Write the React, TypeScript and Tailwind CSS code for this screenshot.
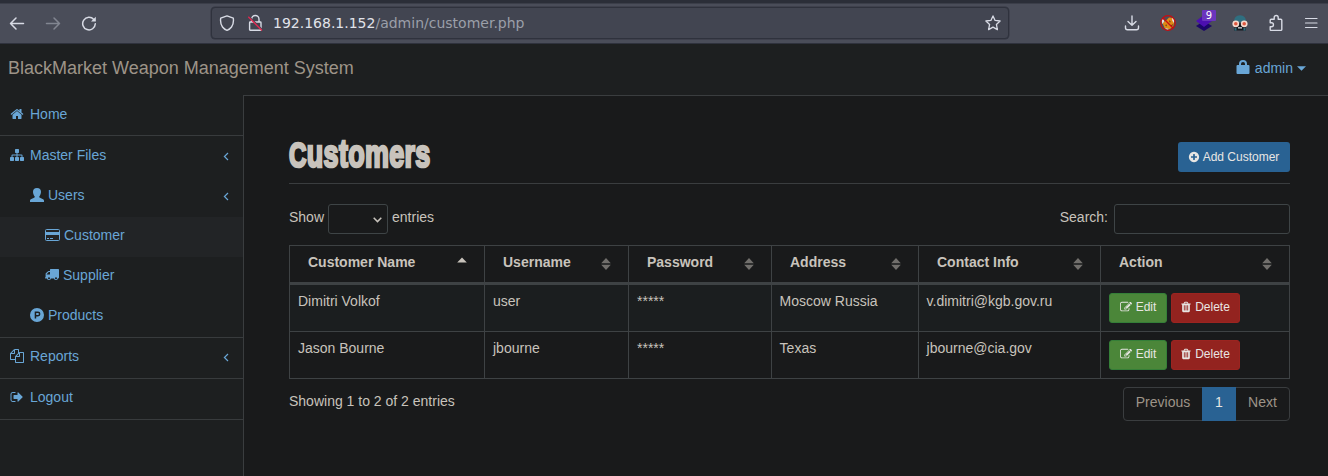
import type { ReactNode } from 'react';

type IconProps = { className?: string };

const PATHS = {
  home: 'M1472 992v480q0 26-19 45t-45 19h-384v-384h-256v384h-384q-26 0-45-19t-19-45v-480q0-1 .5-3t.5-3l575-474 575 474q1 2 1 6zm223-69l-62 74q-8 9-21 11h-3q-13 0-21-7l-692-577-692 577q-12 8-24 7-13-2-21-11l-62-74q-8-10-7-23.5t11-21.5l719-599q32-26 76-26t76 26l244 204v-195q0-14 9-23t23-9h192q14 0 23 9t9 23v408l219 182q10 8 11 21.5t-7 23.5z',
  sitemap: 'M1792 1248v320q0 40-28 68t-68 28h-320q-40 0-68-28t-28-68v-320q0-40 28-68t68-28h96v-192h-512v192h96q40 0 68 28t28 68v320q0 40-28 68t-68 28h-320q-40 0-68-28t-28-68v-320q0-40 28-68t68-28h96v-192h-512v192h96q40 0 68 28t28 68v320q0 40-28 68t-68 28h-320q-40 0-68-28t-28-68v-320q0-40 28-68t68-28h96v-192q0-52 38-90t90-38h512v-192h-96q-40 0-68-28t-28-68v-320q0-40 28-68t68-28h320q40 0 68 28t28 68v320q0 40-28 68t-68 28h-96v192h512q52 0 90 38t38 90v192h96q40 0 68 28t28 68z',
  signOut: 'M704 1440q0 4 1 20t.5 26.5-3 23.5-10 19.5-20.5 6.5h-320q-119 0-203.5-84.5t-84.5-203.5v-704q0-119 84.5-203.5t203.5-84.5h320q13 0 22.5 9.5t9.5 22.5q0 4 1 20t.5 26.5-3 23.5-10 19.5-20.5 6.5h-320q-66 0-113 47t-47 113v704q0 66 47 113t113 47h312l11.5 1 11.5 3 8 5.5 7 9 2 13.5zm928-544q0 26-19 45l-544 544q-19 19-45 19t-45-19-19-45v-288h-448q-26 0-45-19t-19-45v-384q0-26 19-45t45-19h448v-288q0-26 19-45t45-19 45 19l544 544q19 19 19 45z',
  files: 'M1696 384q40 0 68 28t28 68v1216q0 40-28 68t-68 28h-960q-40 0-68-28t-28-68v-288h-544q-40 0-68-28t-28-68v-672q0-40 20-88t48-76l408-408q28-28 76-48t88-20h416q40 0 68 28t28 68v328q68-40 128-40h416zm-544 213l-299 299h299v-299zm-640-384l-299 299h299v-299zm196 647l316-316v-416h-384v416q0 40-28 68t-68 28h-416v640h512v-256q0-40 20-88t48-76zm956 804v-1152h-384v416q0 40-28 68t-68 28h-416v640h896z',
  plus: 'M1344 960v-128q0-26-19-45t-45-19h-256v-256q0-26-19-45t-45-19h-128q-26 0-45 19t-19 45v256h-256q-26 0-45 19t-19 45v128q0 26 19 45t45 19h256v256q0 26 19 45t45 19h128q26 0 45-19t19-45v-256h256q26 0 45-19t19-45zm320-64q0 209-103 385.5t-279.5 279.5-385.5 103-385.5-103-279.5-279.5-103-385.5 103-385.5 279.5-279.5 385.5-103 385.5 103 279.5 279.5 103 385.5z',
  edit: 'M888 1184l116-116-152-152-116 116v56h96v96h56zm440-720q-16-16-33 1l-350 350q-17 17-1 33t33-1l350-350q17-17 1-33zm80 594v190q0 119-84.5 203.5t-203.5 84.5h-832q-119 0-203.5-84.5t-84.5-203.5v-832q0-119 84.5-203.5t203.5-84.5h832q63 0 117 25 15 7 18 23 3 17-9 29l-49 49q-14 14-32 8-23-6-45-6h-832q-66 0-113 47t-47 113v832q0 66 47 113t113 47h832q66 0 113-47t47-113v-126q0-13 9-22l64-64q15-15 35-7t20 29zm-96-738l288 288-672 672h-288v-288zm444 132l-92 92-288-288 92-92q28-28 68-28t68 28l152 152q28 28 28 68t-28 68z',
  trash: 'M704 1376v-704q0-14-9-23t-23-9h-64q-14 0-23 9t-9 23v704q0 14 9 23t23 9h64q14 0 23-9t9-23zm256 0v-704q0-14-9-23t-23-9h-64q-14 0-23 9t-9 23v704q0 14 9 23t23 9h64q14 0 23-9t9-23zm256 0v-704q0-14-9-23t-23-9h-64q-14 0-23 9t-9 23v704q0 14 9 23t23 9h64q14 0 23-9t9-23zm-544-992h448l-48-117q-7-9-17-11h-317q-10 2-17 11zm928 32v64q0 14-9 23t-23 9h-96v948q0 83-47 143.5t-113 60.5h-832q-66 0-113-58.5t-47-141.5v-952h-96q-14 0-23-9t-9-23v-64q0-14 9-23t23-9h309l70-167q15-37 54-63t79-26h320q40 0 79 26t54 63l70 167h309q14 0 23 9t9 23z',
};

function Icon({ name, className = 'size-3.5' }: IconProps & { name: keyof typeof PATHS }) {
  return (
    <svg viewBox="0 0 1792 1792" fill="currentColor" className={`shrink-0 ${className}`}>
      <path d={PATHS[name]} />
    </svg>
  );
}

function UserIcon() {
  return (
    <svg viewBox="0 0 14 14" fill="currentColor" className="size-3.5 shrink-0">
      <path d="M7 0C9.7 0 11 1.3 11 3.8C11 5.5 10.3 7.3 9.3 8.4C9.1 9.1 9.3 9.4 10 9.7L12.6 10.9C13.5 11.3 14 11.8 14 12.6V14H0V12.6C0 11.8 .5 11.3 1.4 10.9L4 9.7C4.7 9.4 4.9 9.1 4.7 8.4C3.7 7.3 3 5.5 3 3.8C3 1.3 4.3 0 7 0Z" />
    </svg>
  );
}

function CardIcon() {
  return (
    <svg viewBox="0 0 15 12" className="h-3 w-[15px] shrink-0">
      <rect x=".5" y=".5" width="14" height="11" rx="1" fill="none" stroke="currentColor" />
      <path d="M1 3h13v3H1zM2 9h2v1H2zM5 9h3v1H5z" fill="currentColor" />
    </svg>
  );
}

function TruckIcon() {
  return (
    <svg viewBox="0 0 14 12" fill="currentColor" className="h-3 w-3.5 shrink-0">
      <path fillRule="evenodd" d="M5.6 0H13.3Q14 0 14 .7V8.6Q14 9.4 13.2 9.4H12.9A2 2 0 0 1 9 9.4H5.9A2 2 0 0 1 2 9.4H.4Q0 9.4 0 9V8.6L.6 8.2V5Q.6 4.5 1 4.1L2.8 2.4Q3.1 2 3.6 2H5V.7Q5 0 5.6 0ZM3.7 3L1.6 5.2V5.6H5V3ZM4 8.3A1 1 0 1 0 4 10.3A1 1 0 0 0 4 8.3ZM11 8.3A1 1 0 1 0 11 10.3A1 1 0 0 0 11 8.3Z" />
    </svg>
  );
}

function ProductIcon() {
  return (
    <svg viewBox="0 0 14 14" fill="currentColor" className="size-3.5 shrink-0">
      <path fillRule="evenodd" d="M7 0A7 7 0 1 1 7 14A7 7 0 0 1 7 0ZM4.7 3.6V10.4H6.2V8.4H8A2.4 2.4 0 0 0 8 3.6ZM6.2 5.1H8A.9.9 0 0 1 8 6.9H6.2Z" />
    </svg>
  );
}

function Chevron() {
  return (
    <svg viewBox="0 0 6 9" fill="none" stroke="currentColor" strokeWidth="1.2" className="mt-0.5 ml-auto h-[9px] w-1.5">
      <path d="M5 1L1.4 4.5L5 8" />
    </svg>
  );
}

function SortIcon({ active }: { active?: boolean }) {
  return active ? (
    <svg viewBox="0 0 10 12" className="mt-0.5 h-3 w-2.5 fill-[#c8c3bc]">
      <path d="M.2 5.6L5 .6L9.8 5.6Z" />
    </svg>
  ) : (
    <svg viewBox="0 0 10 12" className="mt-1 h-3 w-2.5 fill-[#716f6c]">
      <path d="M.2 5.3L5 0L9.8 5.3ZM.2 6.7H9.8L5 12Z" />
    </svg>
  );
}

function BrowserBar() {
  return (
    <header className="flex h-[43px] shrink-0 items-center border-t-[3px] border-[#2b2e38] bg-[#4a4d59] text-[#d8dbe5] shadow-[0_1px_0_#2f323d,inset_0_1px_0_#3b3e49]">
      <svg viewBox="0 0 100 16" fill="none" stroke="currentColor" strokeWidth="1.5" className="ml-[9px] h-4 w-[100px] shrink-0" strokeLinecap="round" strokeLinejoin="round">
        <path d="M1.5 8.5H14.5M7 3L1.5 8.5L7 14" />
        <path d="M37.5 8.5H50.5M45 3L50.5 8.5L45 14" opacity=".4" />
        <path d="M84.8 4.5A6.3 6.3 0 1 0 86.3 8.8" />
        <path d="M86.8 1.8V6.5H82Z" fill="currentColor" stroke="none" />
      </svg>
      <div className="ml-[102px] flex h-8 w-[798px] shrink-0 items-center rounded border border-[#2f323d] bg-[#424551] shadow-[0_0_0_0.5px_#343743]">
        <svg viewBox="0 0 16 16" fill="none" stroke="currentColor" strokeWidth="1.4" strokeLinejoin="round" className="ml-[7px] size-4">
          <path d="M8 .9L14.3 3.2Q15 8.5 12.5 12Q10.8 14.3 8 15.3Q5.2 14.3 3.5 12Q1 8.5 1.7 3.2Z" />
        </svg>
        <svg viewBox="0 0 16 18" fill="none" stroke="currentColor" strokeWidth="1.4" className="ml-3 h-[18px] w-4">
          <path d="M4.6 8V5.2A3.7 3.7 0 0 1 12 5.2V8M3.2 8H13.4Q14 8 14 8.7V15.6Q14 16.2 13.4 16.2H3.2Q2.6 16.2 2.6 15.6V8.7Q2.6 8 3.2 8Z" />
          <path d="M2 2.4L15.4 15.6" className="stroke-[#424551]" strokeWidth="1.2" />
          <path d="M1.3 2.8L15 16.5" className="stroke-[#e22850]" strokeWidth="1.3" />
        </svg>
        <span className="ml-2.5 font-['DejaVu_Sans',sans-serif] text-[14px] whitespace-nowrap text-[#9b9fa9]">
          <span className="text-[#e1e3ea]">192.168.1.152</span>/admin/customer.php
        </span>
        <svg viewBox="0 0 16 16" fill="none" stroke="currentColor" strokeWidth="1.3" strokeLinejoin="round" className="mr-[7px] ml-auto size-4">
          <path d="M8 .9L10.1 5.4L15.1 6L11.4 9.4L12.4 14.6L8 12.1L3.6 14.6L4.6 9.4L.9 6L5.9 5.4Z" />
        </svg>
      </div>
      <div className="ml-auto flex items-center pr-[10px]">
        <svg viewBox="0 0 16 16" fill="none" stroke="currentColor" strokeWidth="1.4" strokeLinecap="round" strokeLinejoin="round" className="mr-5 size-4">
          <path d="M8 1V10M4 6.5L8 10.3L12 6.5M1.5 11V12.8Q1.5 14.8 3.5 14.8H12.5Q14.5 14.8 14.5 12.8V11" />
        </svg>
        <svg viewBox="0 0 16 16" className="mr-5 size-4">
          <path d="M2.5 8L6 5.5L9 2.5L14 3L14 8L13 12L9 14.5L4.5 13Z" fill="#e18a16" />
          <path d="M1.2 5L3 4L4.5 6L2.5 9ZM12.5 2.5L14.5 5.5L13.6 8L12 5ZM5 13L9 14L7 15Z" fill="#e6e0dc" />
          <path d="M5 10L7 9.5L6.5 11.5ZM9 5L11 7L9.5 7.5ZM10.5 10.5L13 9L12 12Z" fill="#704214" />
          <circle cx="8" cy="8" r="7.3" fill="none" stroke="#c90c10" strokeWidth="1.2" />
          <path d="M2.8 2.8L13.2 13.2" stroke="#c90c10" strokeWidth="1.3" />
        </svg>
        <div className="relative mr-5 size-4">
          <svg viewBox="0 0 16 16" className="size-4">
            <path d="M8 6L16 11L8 16L0 11Z" fill="#1c0669" />
            <path d="M8 0L16 6L8 12L0 6Z" fill="#4c0fb0" />
          </svg>
          <span className="absolute -top-[5px] left-1.5 flex h-[11px] w-3.5 items-center justify-center rounded-[1px] bg-[#6b35bd] font-['DejaVu_Sans',sans-serif] text-[10px] leading-none text-white">9</span>
        </div>
        <svg viewBox="0 0 16 16" className="mr-5 size-4">
          <path d="M2 7Q2 .3 8 .3T14 7Z" fill="#2f6f80" />
          <path d="M2.5 12Q5 10 8 10T13.5 12L14 15.5H2Z" fill="#151b21" />
          <path d="M2.5 13h2v2.5h-2zM11.5 13h2v2.5h-2z" fill="#2f6f80" />
          <path d="M6 12.2h4v1.3H6z" fill="#d9dadd" />
          <path d="M6 8h4v3H6z" fill="#11151a" />
          <circle cx="3.8" cy="8.8" r="2.6" fill="#df5941" stroke="#f4d9ce" strokeWidth="1.6" />
          <circle cx="12.2" cy="8.8" r="2.6" fill="#df5941" stroke="#f4d9ce" strokeWidth="1.6" />
        </svg>
        <svg viewBox="0 0 16 18" fill="none" stroke="currentColor" strokeWidth="1.4" strokeLinejoin="round" className="mr-5 h-[18px] w-4">
          <path d="M2.2 6.2Q2.2 5.2 3.2 5.2H6.2V3.5A2 2 0 0 1 10.2 3.5V5.2H12.8Q13.8 5.2 13.8 6.2V15.4Q13.8 16.4 12.8 16.4H3.2Q2.2 16.4 2.2 15.4V12.7H3.5A1.9 1.9 0 0 0 3.5 8.8H2.2Z" />
        </svg>
        <svg viewBox="0 0 14 12" fill="none" stroke="currentColor" strokeWidth="1.2" strokeLinecap="round" className="h-3 w-3.5">
          <path d="M1.5 1.5H13M1.5 6H13M1.5 10.5H13" />
        </svg>
      </div>
    </header>
  );
}

function NavItem({ icon, label, className, expandable }: { icon: ReactNode; label: string; className: string; expandable?: boolean }) {
  return (
    <a className={`flex h-10 items-center pr-3.5 pb-0.5 ${className}`}>
      {icon}
      <span>{label}</span>
      {expandable && <Chevron />}
    </a>
  );
}

function Sidebar() {
  return (
    <nav className="w-[243px] shrink-0 text-[#69a6d6]">
      <div className="border-b border-[#383b3d]">
        <NavItem icon={<Icon name="home" />} label="Home" className="gap-1.5 pl-2.5" />
      </div>
      <div className="border-b border-[#383b3d] pt-px [&>a]:pb-1">
        <NavItem icon={<Icon name="sitemap" />} label="Master Files" className="gap-1.5 pl-2.5" expandable />
        <NavItem icon={<UserIcon />} label="Users" className="gap-1 pl-[30px]" expandable />
        <NavItem icon={<CardIcon />} label="Customer" className="gap-1 bg-[#222426] pl-[45px]" />
        <NavItem icon={<TruckIcon />} label="Supplier" className="gap-1 pl-[45px]" />
        <NavItem icon={<ProductIcon />} label="Products" className="gap-1 pl-[30px]" />
      </div>
      <div className="border-b border-[#383b3d] [&>a]:pb-1">
        <NavItem icon={<Icon name="files" />} label="Reports" className="gap-1.5 pl-2.5" expandable />
      </div>
      <div className="border-b border-[#383b3d] [&>a]:pb-1">
        <NavItem icon={<Icon name="signOut" />} label="Logout" className="gap-1.5 pl-2.5" />
      </div>
    </nav>
  );
}

const COLUMNS = ['Customer Name', 'Username', 'Password', 'Address', 'Contact Info', 'Action'];
const ROWS = [
  ['Dimitri Volkof', 'user', '*****', 'Moscow Russia', 'v.dimitri@kgb.gov.ru'],
  ['Jason Bourne', 'jbourne', '*****', 'Texas', 'jbourne@cia.gov'],
];

function CustomersTable() {
  return (
    <table className="mt-[11px] w-[1001px] table-fixed border-separate border-spacing-0 border-t border-l border-[#3e4244]">
      <colgroup>
        <col className="w-[195px]" />
        <col className="w-[144px]" />
        <col className="w-[143px]" />
        <col className="w-[147px]" />
        <col className="w-[182px]" />
        <col className="w-[189px]" />
      </colgroup>
      <thead>
        <tr>
          {COLUMNS.map((c, i) => (
            <th key={c} className="h-[39px] border-r border-b-3 border-[#3e4244] p-0 text-left align-top">
              <div className="flex items-center justify-between pt-1.5 pr-[17px] pl-[18px] leading-5">
                {c}
                <SortIcon active={i === 0} />
              </div>
            </th>
          ))}
        </tr>
      </thead>
      <tbody>
        {ROWS.map((row, r) => (
          <tr key={row[0]} className={r === 0 ? 'bg-[#1b1e1f]' : ''}>
            {row.map((v, i) => (
              <td key={i} className={`h-[47px] border-r border-b border-[#3e4244] pt-1.5 pr-2 pb-0 align-top leading-5 ${i < 3 ? 'pl-2' : 'pl-[7.6px]'}`}>
                {v}
              </td>
            ))}
            <td className="h-[47px] border-r border-b border-[#3e4244] p-0 align-top">
              <div className="flex gap-1 pt-2 pl-2 text-xs text-[#e8e6e3]">
                <button className="flex h-[30px] w-[58px] items-center justify-center gap-1 rounded-[3px] border border-[#357f38] bg-[#4b8639] pb-0.5">
                  <Icon name="edit" className="size-3" />
                  Edit
                </button>
                <button className="flex h-[30px] w-[69px] items-center justify-center gap-[3px] rounded-[3px] border border-[#9b2420] bg-[#93231f] pr-px pb-0.5">
                  <Icon name="trash" className="size-3" />
                  Delete
                </button>
              </div>
            </td>
          </tr>
        ))}
      </tbody>
    </table>
  );
}

export default function App() {
  return (
    <div className="flex h-[476px] w-[1328px] flex-col overflow-hidden bg-[#1d1f20] font-['Liberation_Sans',Arial,sans-serif] text-sm leading-5 text-[#c8c3bc]">
      <BrowserBar />
      <div className="flex h-[52px] shrink-0 items-center justify-between pr-[22px] pl-2">
        <span className="pb-0.5 text-lg text-[#9d9488]">BlackMarket Weapon Management System</span>
        <span className="flex items-center pb-0.5 text-[#69a6d6]">
          <svg viewBox="0 0 14 14" className="mr-[5px] mb-0.5 size-3.5" fill="currentColor">
            <path fillRule="evenodd" d="M3 5V4Q3 0 7 0T11 4V5H12.5Q13.5 5 13.5 6V13Q13.5 14 12.5 14H1.5Q.5 14 .5 13V6Q.5 5 1.5 5ZM5 5H9V4Q9 2 7 2T5 4Z" />
          </svg>
          admin
          <svg viewBox="0 0 9 5" className="ml-1 h-[5px] w-[9px]" fill="currentColor">
            <path d="M0 .3H9L4.5 4.8Z" />
          </svg>
        </span>
      </div>
      <div className="flex min-h-0 flex-1">
        <Sidebar />
        <main className="flex-1 border-t border-l border-[#3a3d3f] bg-[#191a1b] pt-[34px] pl-[45px]">
          <div className="flex h-[54px] w-[1001px] items-start justify-between border-b border-[#3a3d3f]">
            <h1 className="origin-left scale-x-[0.69] pt-[5px] text-[39px] leading-[38px] font-bold tracking-[0.5px] [-webkit-text-stroke:2.6px_#c8c3bc] first-letter:text-[35px]">Customers</h1>
            <button className="mt-3 flex h-[30px] w-28 items-center justify-center gap-[3px] rounded-[3px] bg-[#296293] pr-px text-xs text-[#e8e6e3]">
              <Icon name="plus" className="size-3" />
              Add Customer
            </button>
          </div>
          <div className="mt-5 flex h-[30px] w-[1001px] items-center justify-between">
            <label className="flex items-center gap-1">
              <span className="pb-1">Show</span>
              <span className="flex h-[30px] w-[60px] items-center justify-end rounded-[3px] border border-[#3e4446] pr-[5px]">
                <svg viewBox="0 0 9 6" fill="none" stroke="currentColor" strokeWidth="1.5" className="mt-px h-1.5 w-[9px]">
                  <path d="M.7 .8L4.5 4.6L8.3 .8" />
                </svg>
              </span>
              <span className="pb-1">entries</span>
            </label>
            <label className="flex items-center gap-1.5">
              <span className="pb-1">Search:</span>
              <input className="h-[30px] w-44 rounded-[3px] border border-[#3e4446] bg-transparent px-2 outline-none" />
            </label>
          </div>
          <CustomersTable />
          <div className="flex w-[1001px] items-start justify-between">
            <span className="pt-3">Showing 1 to 2 of 2 entries</span>
            <div className="mt-2 flex h-[34px] w-[167px] rounded border border-[#3a3d3f] leading-7 text-[#9d9488]">
              <span className="w-[78px] text-center">Previous</span>
              <span className="-my-px w-[34px] bg-[#296293] pt-px text-center text-[#e8e6e3]">1</span>
              <span className="flex-1 text-center">Next</span>
            </div>
          </div>
        </main>
      </div>
    </div>
  );
}
